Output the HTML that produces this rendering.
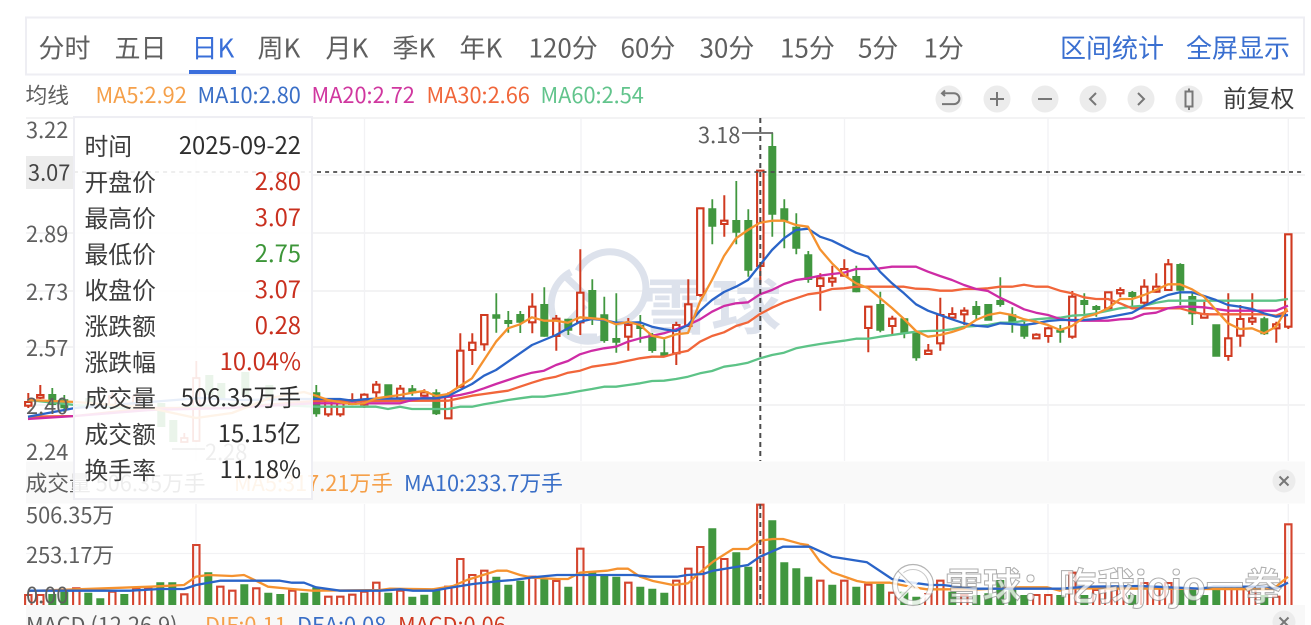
<!DOCTYPE html>
<html lang="zh-CN"><head><meta charset="utf-8"><title>K</title>
<style>
html,body{margin:0;padding:0;background:#fff;width:1311px;height:625px;overflow:hidden}
svg{display:block;font-family:"Noto Sans CJK SC","Liberation Sans",sans-serif;filter:blur(.35px)}
</style></head><body>
<svg width="1311" height="625" viewBox="0 0 1311 625" xmlns="http://www.w3.org/2000/svg">
<!-- tab bar -->
<rect x="26" y="17.5" width="1278" height="57" fill="#fff" stroke="#eeeef3" stroke-width="2"/>
<g font-size="26" fill="#5f5f5f">
<text x="38.500" y="57.500">分时</text><text x="114.500" y="57.500">五日</text>
<text x="191.500" y="57.500" fill="#3a6fd8">日K</text>
<text x="257.500" y="57.500">周K</text><text x="325.500" y="57.500">月K</text><text x="392.500" y="57.500">季K</text><text x="459.500" y="57.500">年K</text>
<text x="528.500" y="57.500">120分</text><text x="620.500" y="57.500">60分</text><text x="699.500" y="57.500">30分</text><text x="780" y="57.500">15分</text><text x="858" y="57.500">5分</text><text x="923.500" y="57.500">1分</text>
<text x="1060" y="57.500" fill="#3a6fd0">区间统计</text><text x="1186" y="57.500" fill="#3a6fd0">全屏显示</text>
</g>
<rect x="189" y="70" width="47" height="4" fill="#3b6fdc"/>
<!-- MA row -->
<g font-size="21.76">
<text x="25.500" y="103" fill="#5f5f5f">均线</text>
<text x="95.500" y="103" fill="#f5a04a">MA5:2.92</text>
<text x="197.500" y="103" fill="#3a6fc7">MA10:2.80</text>
<text x="311.500" y="103" fill="#d0379f">MA20:2.72</text>
<text x="426.500" y="103" fill="#f0663a">MA30:2.66</text>
<text x="540.500" y="103" fill="#62c48c">MA60:2.54</text>
</g>
<!-- toolbar -->
<g fill="#ececec"><circle cx="949" cy="99" r="13.5"/><circle cx="997" cy="99" r="13.5"/><circle cx="1045" cy="99" r="13.5"/><circle cx="1093" cy="99" r="13.5"/><circle cx="1141" cy="99" r="13.5"/><circle cx="1189" cy="99" r="13.5"/></g>
<g fill="none" stroke="#777" stroke-width="2">
<path d="M942 93.300H954a5.400 5.400 0 0 1 0 10.800H942M945 90.500L942 93.300L945 96"/>
<path d="M990 99H1004M997 92V106"/>
<path d="M1038 99H1052"/>
<path d="M1096 93L1090 99L1096 105"/>
<path d="M1138 93L1144 99L1138 105"/>
<path d="M1185.500 91.500H1192.500V106.500H1185.500ZM1189 88.500V91.500M1189 106.500V110"/>
</g>
<text x="1223" y="107" font-size="23.800" fill="#3c3c3c">前复权</text>
<!-- grid -->
<g stroke="#f3f3f4" stroke-width="2" fill="none">
<path d="M26 118H1305M26 175H1305M26 233H1305M26 291H1305M26 347H1305M26 405H1305"/>
</g>
<g stroke="#f2f2f4" stroke-width="1.300" fill="none">
<path d="M196 118V461M364.500 118V461M581 118V461M844.500 118V461M1048 118V461M1288.300 118V461"/>
<path d="M196 504V605M364.500 504V605M581 504V605M844.500 504V605M1048 504V605M1288.300 504V605M26 553.500H1305"/>
</g>
<rect x="26" y="156" width="48" height="33" fill="#ececec"/>
<!-- watermark main -->
<g fill="none" stroke="#dde2ec" stroke-width="7">
<path d="M571 272A36 36 0 1 0 605 337"/>
<path d="M578 271A36 36 0 1 1 617 323"/>
<path d="M566 277L590 300M561 330L585 305M580 337H597"/>
</g>
<text transform="translate(641 329) scale(1.170 1)" font-size="60" font-weight="700" fill="#dde2ec">雪球</text>
<!-- faint candles below tooltip -->
<path fill="none" stroke="#d03a20" stroke-width="1.800" d="M196.300 361V442M184.300 433V440M112.300 392V408M136.300 392V408"/>
<path fill="#fff" stroke="#d03a20" stroke-width="1.800" d="M193.100 378h6.400V441h-6.400zM181.100 438h6.400V442h-6.400zM109.100 396h6.400V405h-6.400zM133.100 396h6.400V404h-6.400z"/>
<path fill="#41973f" d="M157.300 403h8V427h-8zM169.300 420h8V442h-8zM205.300 375h8V395h-8zM217.300 383h8V400h-8zM241.300 372h8V395h-8zM265.300 385h8V398h-8zM85.300 398h8V408h-8z"/>
<path stroke="#666" stroke-width="1.500" d="M172 449H205"/>
<text x="205" y="460" font-size="21.76" fill="#666">2.28</text>
<!-- red wicks -->
<path fill="none" stroke="#d03a20" stroke-width="2" d="M28.300 393V408M40.300 385V399M328.300 398V416.700M340.300 398V416.700M352.300 393.300V405M364.300 393.300V408M376.300 381V398M400.300 385V400M424.300 389.300V397M448.300 392.300V418.300M460.300 333.300V388M472.300 333.300V365M484.300 315V350.700M532.300 293.300V333.300M556.300 315V350.700M580.300 249.300V335M628.300 318V350.700M676.300 321.700V365M688.300 279.300V326.700M700.300 208.300V296.700M724.300 195.300V236.700M760.300 170.700V282.700M820.300 273.300V310.700M832.300 265.700V286.700M844.300 259.300V276.700M868.300 306.700V352.300M892.300 315.700V334M928.300 344V354M940.300 297.700V350.700M952.300 307.300V320M964.300 307.300V325M1036.300 333.300V338.300M1048.300 326.700V342.700M1072.300 291V338.700M1108.300 292.300V310M1120.300 287.300V297.300M1144.300 279.300V305M1156.300 273.300V292.700M1168.300 259V290.700M1204.300 301.700V318.300M1228.300 293.300V360.700M1240.300 305V346.700M1252.300 293.300V325M1276.300 321.700V342.700M1288.300 234.300V329"/>
<!-- red bodies -->
<path fill="#fff" stroke="#d03a20" stroke-width="2.100" d="M25.100 402h6.400V405.700h-6.400zM37.100 395h6.400V397.700h-6.400zM325.100 400h6.400V414.300h-6.400zM337.100 400h6.400V414.300h-6.400zM349.100 400h6.400V404h-6.400zM361.100 394.700h6.400V404.300h-6.400zM373.100 384.700h6.400V392.300h-6.400zM397.100 388.700h6.400V398.300h-6.400zM421.100 392.300h6.400V395.700h-6.400zM445.100 396.700h6.400V418.300h-6.400zM457.100 350.700h6.400V386.700h-6.400zM469.100 342.700h6.400V350h-6.400zM481.100 315h6.400V344.300h-6.400zM529.100 306.700h6.400V322.300h-6.400zM553.100 318.700h6.400V336h-6.400zM577.100 292.700h6.400V322.300h-6.400zM625.100 325h6.400V336.700h-6.400zM673.100 325h6.400V353.300h-6.400zM685.100 304.300h6.400V326h-6.400zM697.100 208.300h6.400V295h-6.400zM721.100 220.700h6.400V224h-6.400zM757.100 170.700h6.400V266h-6.400zM817.100 278.300h6.400V286h-6.400zM829.100 278.300h6.400V281.700h-6.400zM841.100 269h6.400V275.700h-6.400zM865.100 306.700h6.400V328h-6.400zM889.100 318.700h6.400V326h-6.400zM925.100 350.700h6.400V354h-6.400zM937.100 315h6.400V343.300h-6.400zM949.100 314h6.400V317.700h-6.400zM961.100 310.700h6.400V314.300h-6.400zM1033.100 334.700h6.400V338.300h-6.400zM1045.100 328.300h6.400V336h-6.400zM1069.100 296.700h6.400V336.700h-6.400zM1105.100 292.300h6.400V308.300h-6.400zM1117.100 290h6.400V293.300h-6.400zM1141.100 286.700h6.400V302.700h-6.400zM1153.100 286.700h6.400V291.700h-6.400zM1165.100 264.300h6.400V290h-6.400zM1201.100 314h6.400V317.700h-6.400zM1225.100 338.300h6.400V356h-6.400zM1237.100 319h6.400V335.700h-6.400zM1249.100 318.300h6.400V321.700h-6.400zM1273.100 324.300h6.400V328.300h-6.400zM1285.100 234.300h6.400V326.700h-6.400z"/>
<!-- green wicks -->
<path fill="none" stroke="#41973f" stroke-width="1.800" d="M52.300 388V408M64.300 395V412M316.300 385V416.700M412.300 385V395.700M436.300 389.300V415M496.300 293.300V332.700M508.300 311V332.700M520.300 311V333M544.300 287.300V336.700M568.300 318.700V335M592.300 279.300V325M604.300 296.700V342.700M616.300 293.300V352.700M640.300 315V342.700M652.300 333V352.700M664.300 339.300V356.700M712.300 199.300V244.300M736.300 181V244.300M748.300 209.300V276.700M772.300 132.700V236.700M784.300 199.300V248.300M796.300 213.300V254.300M808.300 251V282.700M856.300 265.700V292.300M880.300 291.700V332.300M904.300 318V338.300M916.300 331.700V360.700M976.300 301V319M1000.300 277.300V306.700M1012.300 307.300V332.700M1024.300 321.700V338.700M1060.300 325V342.700M1084.300 293.300V314.300M1096.300 305V316.700M1132.300 291V306.700M1180.300 263.300V305M1192.300 293.300V325M1264.300 316.700V335"/>
<!-- green bodies -->
<path fill="#41973f" d="M48.300 394h8V405h-8zM60.300 399.300h8V408.300h-8zM312.300 392.300h8V414.300h-8zM384.300 384.300h8V398.300h-8zM408.300 388.300h8V393.300h-8zM432.300 392.300h8V414.300h-8zM492.300 314.300h8V318.700h-8zM504.300 320h8V324h-8zM516.300 314h8V322.700h-8zM540.300 304h8V336.700h-8zM564.300 318.700h8V330.700h-8zM588.300 290h8V318.700h-8zM600.300 314.300h8V341h-8zM612.300 338h8V342.700h-8zM636.300 325h8V329h-8zM648.300 334.300h8V351h-8zM660.300 352.300h8V355.700h-8zM708.300 208.300h8V226.700h-8zM732.300 220h8V232.700h-8zM744.300 220h8V270.700h-8zM768.300 146h8V214.700h-8zM780.300 208.300h8V220.700h-8zM792.300 226.700h8V248.700h-8zM804.300 254.300h8V280h-8zM852.300 276h8V292.300h-8zM876.300 304h8V330.700h-8zM900.300 318.300h8V333.300h-8zM912.300 332.300h8V358.300h-8zM972.300 306h8V315h-8zM984.300 304h8V320.700h-8zM996.300 300h8V305h-8zM1008.300 314.300h8V321.700h-8zM1020.300 325h8V336.700h-8zM1056.300 330h8V332.700h-8zM1080.300 300h8V305h-8zM1092.300 306h8V310h-8zM1128.300 292h8V297h-8zM1176.300 264h8V290.700h-8zM1188.300 296h8V314.300h-8zM1212.300 324.300h8V356.700h-8zM1260.300 318.300h8V334.300h-8z"/>
<!-- MA lines -->
<g fill="none" stroke-width="2.300" stroke-linejoin="round">
<polyline stroke="#5dc387" points="28,400 75,405 150,410 230,404 300,406 316,406.700 340,406.700 376,406.700 388,409 400,406.700 412,409 448,409 460,406.700 472,406.700 484,404.300 496,402.300 508,400 520,398.300 532,396.700 544,396.700 556,395 568,393.300 580,391 592,389 604,386.700 616,386.700 628,385 640,383.300 652,381 664,380.700 676,379 688,376.700 700,373.300 712,371 724,366.700 736,365 748,362.700 760,358.300 772,355 784,352.700 796,348.300 808,346 820,344 832,342.300 844,340.700 856,338.700 868,338.700 880,336.700 892,335 904,333.300 916,331.700 928,331 940,330.700 952,329.300 964,326.700 976,326 988,325 1000,322.700 1012,322.700 1024,320.700 1036,319.300 1048,318.300 1060,317.700 1072,315.700 1084,315 1096,313.300 1108,310.700 1120,308.300 1132,306.700 1144,305.700 1156,302.700 1168,300.700 1180,300.700 1192,300.700 1204,300.700 1216,300.700 1228,300.700 1240,300.700 1252,300.700 1264,300.700 1276,300.700 1288,299"/>
<polyline stroke="#f1663a" points="28,416.700 75,416 150,408 230,408 300,402 316,401 448,400.700 460,398.300 472,395.700 484,394 496,392.300 508,390.700 520,386.700 532,382.700 544,379 556,376.700 568,372.700 580,370.700 592,366.700 604,365 616,363.300 628,360.700 640,358.300 652,356.700 664,356.700 676,353.300 688,350.700 700,341.700 712,336 724,332.300 736,326 748,322.300 760,314 772,307.700 784,302.300 796,298.300 808,294.300 820,292.700 832,289 844,288.300 856,286.700 904,286.700 916,288.700 928,289 940,290.700 952,290.700 964,289 976,289 988,288.300 1000,286.700 1012,286.700 1024,284.700 1036,286.700 1048,286.700 1060,290.700 1072,293.300 1084,297.300 1096,299 1108,299 1120,303.300 1132,308.300 1180,308.300 1192,311.700 1204,314.300 1264,314.300 1276,315.700 1288,310.700"/>
<polyline stroke="#ce2ca5" points="28,419 75,416 150,410 230,408 300,404 316,403.300 400,403.300 412,400 424,397.700 436,398.300 448,396.700 460,395 472,392.300 484,388.300 496,384 508,380 520,376 532,372.700 544,370.700 556,365 568,361 580,354.300 592,350.700 604,348.300 616,346.700 628,341.700 640,338.300 652,335.700 664,333.300 676,329.300 688,325 700,319.300 712,311.700 724,306 736,303.300 748,302.300 760,294.300 772,290 784,284 796,280 808,278.300 820,275.700 832,274 844,272.700 856,269 868,269 880,268.300 892,266.700 916,266.700 928,271.700 940,276 952,280 964,285 976,289 988,291 1000,297.700 1012,303.300 1024,309.300 1036,312.700 1048,315 1060,319 1072,320.700 1108,320.700 1120,319.300 1132,318.700 1144,314 1156,312.700 1168,308.300 1180,306.700 1192,306.700 1204,307.300 1216,309 1228,310.700 1276,310.700 1288,305.700"/>
<polyline stroke="#2a64c8" points="28,416.700 75,408 150,402 200,398 240,400 300,399 340,399 352,400.700 364,399.300 376,398.700 436,398.300 448,396 460,390 472,384 484,375.700 496,370 508,361.700 520,353.300 532,345 544,340 556,335 568,328.300 580,321.700 592,319 604,320 616,322.700 628,322.700 640,322.300 652,326.700 664,329.300 676,331 688,325 700,310.700 712,300 724,292 736,286.700 748,280 760,265 772,250 784,238.300 796,230 808,228.700 820,236.700 832,240.700 844,246.700 856,252.700 868,256.700 880,271.700 892,283.300 904,293.300 916,304.300 928,310.700 940,315 952,319.300 964,323.300 976,325.700 988,326.700 1000,323.300 1012,324 1024,325 1036,323.300 1048,321 1060,320 1084,320 1096,319 1108,317.300 1120,315 1132,312.700 1144,306 1156,300 1168,295 1180,292.300 1192,292.300 1204,296 1216,300 1228,305 1240,306.700 1252,309 1264,313.300 1276,316.700 1288,315"/>
<polyline stroke="#f5922f" points="28,400 76,402 150,408 196,418 232,413 270,398 304,392 316,395.700 328,400 340,402.300 352,404 364,403.300 376,398.300 388,396.700 400,395 412,392.700 424,391 436,396 448,394 460,386 472,378.300 484,360 496,341.700 508,328.300 520,324.300 532,317.300 544,320.700 556,320.700 568,322.700 580,317.300 592,318.300 604,319.300 616,324.300 628,322 640,325 652,335.700 664,338.300 676,334.300 688,333 700,301.700 712,280 724,256 736,238.300 748,230 760,222.700 772,220.700 784,220.700 796,225 808,226.700 820,249.300 832,263.300 844,275 856,283.300 868,288 880,298 892,308 904,319 916,331 928,336.700 940,335 952,332 964,328 976,320 988,315 1000,312.700 1012,315 1024,319.300 1036,321.700 1048,325 1060,330 1072,326 1084,317.300 1096,314 1108,308.300 1120,299 1132,299 1144,295 1156,290 1168,284.300 1180,284.300 1192,289.300 1204,296.700 1216,310 1228,323.300 1240,329 1252,328.300 1264,333.300 1276,326.700 1287,308.300"/>
</g>
<!-- 3.18 marker -->
<path stroke="#666" stroke-width="1.800" d="M742 133H773"/>
<text x="698" y="143" font-size="21.76" fill="#5f5f5f">3.18</text>
<!-- volume band -->
<rect x="26" y="461.500" width="1279" height="42" fill="#f9f9f9"/>
<rect x="26" y="605" width="1279" height="20" fill="#f8f8f8"/>
<!-- volume bars -->
<path fill="#41973f" d="M48.300 594h8V605h-8zM60.300 591.700h8V605h-8zM84.300 592.700h8V605h-8zM96.300 598.300h8V605h-8zM120.300 594h8V605h-8zM156.300 582.300h8V605h-8zM168.300 582.300h8V605h-8zM204.300 572.300h8V605h-8zM240.300 584.300h8V605h-8zM264.300 592.700h8V605h-8zM276.300 594h8V605h-8zM300.300 592.700h8V605h-8zM312.300 587.300h8V605h-8zM384.300 592.700h8V605h-8zM408.300 596.700h8V605h-8zM420.300 594.700h8V605h-8zM432.300 588.300h8V605h-8zM492.300 576.700h8V605h-8zM504.300 584.700h8V605h-8zM516.300 580.700h8V605h-8zM540.300 578.700h8V605h-8zM564.300 586.700h8V605h-8zM588.300 571.700h8V605h-8zM600.300 574.700h8V605h-8zM612.300 576.700h8V605h-8zM636.300 586.700h8V605h-8zM648.300 588.700h8V605h-8zM660.300 592.700h8V605h-8zM708.300 528.300h8V605h-8zM732.300 552.300h8V605h-8zM744.300 566.700h8V605h-8zM768.300 520.300h8V605h-8zM780.300 562.300h8V605h-8zM792.300 568.300h8V605h-8zM804.300 576.700h8V605h-8zM828.300 584.700h8V605h-8zM852.300 586.700h8V605h-8zM876.300 584h8V605h-8zM900.300 591.700h8V605h-8zM912.300 596.700h8V605h-8zM948.300 591.700h8V605h-8zM972.300 595h8V605h-8zM984.300 593.300h8V605h-8zM996.300 580h8V605h-8zM1008.300 586.700h8V605h-8zM1020.300 595h8V605h-8zM1056.300 595h8V605h-8zM1080.300 595h8V605h-8zM1128.300 595h8V605h-8zM1176.300 588h8V605h-8zM1188.300 588h8V605h-8zM1200.300 595h8V605h-8zM1212.300 588h8V605h-8zM1260.300 595h8V605h-8z"/>
<path fill="none" stroke="#d4452f" stroke-width="2.100" d="M25.100 605V595h6.400V605M37.100 605V595h6.400V605M73.100 605V588.300h6.400V605M109.100 605V591.700h6.400V605M133.100 605V588.300h6.400V605M145.100 605V588.300h6.400V605M181.100 605V594.300h6.400V605M193.100 605V545h6.400V605M217.100 605V586.700h6.400V605M229.100 605V590.700h6.400V605M253.100 605V588.300h6.400V605M289.100 605V590.700h6.400V605M325.100 605V596.700h6.400V605M337.100 605V596.700h6.400V605M349.100 605V594.700h6.400V605M361.100 605V591.700h6.400V605M373.100 605V582.700h6.400V605M397.100 605V590.700h6.400V605M445.100 605V586.700h6.400V605M457.100 605V559h6.400V605M469.100 605V575h6.400V605M481.100 605V570.700h6.400V605M529.100 605V576.700h6.400V605M553.100 605V581h6.400V605M577.100 605V548.700h6.400V605M625.100 605V582.700h6.400V605M673.100 605V580.700h6.400V605M685.100 605V568.700h6.400V605M697.100 605V547h6.400V605M721.100 605V559h6.400V605M757.100 605V504.700h6.400V605M817.100 605V580.700h6.400V605M841.100 605V580.700h6.400V605M865.100 605V584.700h6.400V605M889.100 605V592.700h6.400V605M925.100 605V594h6.400V605M937.100 605V580.700h6.400V605M961.100 605V595h6.400V605M1033.100 605V595h6.400V605M1045.100 605V595h6.400V605M1069.100 605V572.700h6.400V605M1093.100 605V590h6.400V605M1105.100 605V586.700h6.400V605M1117.100 605V586.700h6.400V605M1141.100 605V583h6.400V605M1153.100 605V588h6.400V605M1165.100 605V583h6.400V605M1225.100 605V586.700h6.400V605M1237.100 605V588h6.400V605M1249.100 605V588h6.400V605M1273.100 605V596.700h6.400V605M1285.100 605V524.300h6.400V605"/>
<g fill="none" stroke-width="2.300" stroke-linejoin="round">
<polyline stroke="#f5922f" points="28,591 150,586.700 184,585 196,576.700 208,575 232,576 244,575 256,580.700 268,586.700 292,589 304,590 313,590.700 380,590 390,588.700 433,589.300 453,586 467,580 483,575 497,570.700 507,570.700 520,575 533,577.700 557,579 568,579 580,572.700 607,570.700 617,568.700 628,568.700 640,576.700 653,581 673,585 688,583.300 697,575 713,561.700 733,549 748,549 760,540.700 773,539 783,539 800,543.700 808,545 820,561.700 832,572.300 857,581 867,582.700 890,582.700 913,587.300 927,589.300 980,589.300 1020,587.300 1047,587.300 1060,590.700 1067,588.300 1273,589.300 1288,576.700"/>
<polyline stroke="#2a64c8" points="28,590.700 130,590.700 160,589 184,589 196,585 220,580.700 280,580.700 292,582.700 304,582.700 316,587.300 340,590.700 380,590.700 400,589.300 413,590.700 433,590.700 453,587.300 473,584 500,581 513,580 533,577.300 557,575 633,575 650,576.700 677,576.700 687,575 703,574 713,570.700 748,565 760,556.700 783,546.700 810,546.700 832,556.700 867,562.300 892,579 913,582.700 930,585 943,585 973,588.700 1060,588.700 1087,586.700 1140,586 1200,588.700 1213,586.700 1267,586.700 1276,588.700 1288,582.700"/>
</g>
<!-- crosshair -->
<path fill="none" stroke="#4c4c4c" stroke-width="2" stroke-dasharray="5 4" d="M760.300 118V461M760.300 504V605"/>
<path fill="none" stroke="#4c4c4c" stroke-width="1.800" stroke-dasharray="4 4.100" d="M74 172H1305"/>
<!-- axis labels -->
<g font-size="21.76" fill="#5f5f5f">
<text x="26" y="138">3.22</text><text x="28" y="180.500" fill="#444">3.07</text><text x="26" y="242">2.89</text><text x="26" y="300">2.73</text><text x="26" y="356">2.57</text><text x="26" y="414">2.40</text><text x="26" y="460">2.24</text>
<text x="26" y="523">506.35万</text><text x="26" y="563">253.17万</text><text x="26" y="603">0.00</text>
<text x="25.500" y="491">成交量 506.35万手</text>
<text x="234" y="491" fill="#f5a04a">MA5:317.21万手</text>
<text x="404" y="491" fill="#3a6fc7">MA10:233.7万手</text>
<text x="26" y="633">MACD (12,26,9)</text>
<text x="205" y="633" fill="#f5a04a">DIF:0.11</text>
<text x="297" y="633" fill="#3a6fc7">DEA:0.08</text>
<text x="398" y="633" fill="#d03a20">MACD:0.06</text>
</g>
<circle cx="1284" cy="481" r="11.500" fill="#ececec"/>
<path d="M1279.500 476.500L1288.500 485.500M1288.500 476.500L1279.500 485.500" stroke="#777" stroke-width="2"/>
<circle cx="1284" cy="622" r="11.500" fill="#ececec"/>
<path d="M1279.500 617.500L1288.500 626.500M1288.500 617.500L1279.500 626.500" stroke="#777" stroke-width="2"/>
<!-- tooltip -->
<rect x="74" y="117" width="238" height="382" fill="#fff" fill-opacity=".89" stroke="#eeeef3" stroke-width="2"/>
<g font-size="23.800" fill="#3c3c3c">
<text x="84.500" y="155">时间</text><text x="84.500" y="191">开盘价</text><text x="84.500" y="227">最高价</text><text x="84.500" y="263">最低价</text><text x="84.500" y="299">收盘价</text><text x="84.500" y="335">涨跌额</text><text x="84.500" y="371">涨跌幅</text><text x="84.500" y="407">成交量</text><text x="84.500" y="443">成交额</text><text x="84.500" y="479">换手率</text>
</g>
<g font-size="23.800" fill="#2e2e2e" text-anchor="end">
<text x="301" y="154">2025-09-22</text>
<text x="301" y="190" fill="#c9301f">2.80</text>
<text x="301" y="226" fill="#c9301f">3.07</text>
<text x="301" y="262" fill="#3d9639">2.75</text>
<text x="301" y="298" fill="#c9301f">3.07</text>
<text x="301" y="334" fill="#c9301f">0.28</text>
<text x="301" y="370" fill="#c9301f">10.04%</text>
<text x="301" y="406">506.35万手</text>
<text x="301" y="442">15.15亿</text>
<text x="301" y="478">11.18%</text>
</g>
<!-- bottom-right watermark -->
<g fill="none">
<circle cx="913" cy="585" r="18" stroke="#fff" stroke-opacity=".85" stroke-width="5"/>
<circle cx="913" cy="585" r="20.500" stroke="#777" stroke-opacity=".55" stroke-width="1.200"/>
<circle cx="913" cy="585" r="15.500" stroke="#777" stroke-opacity=".4" stroke-width="1"/>
<path d="M900 573L925 598M900 597L922 575" stroke="#fff" stroke-opacity=".85" stroke-width="5"/>
<path d="M898 571L915 588M898 600L912 586" stroke="#777" stroke-opacity=".45" stroke-width="1"/>
</g>
<text x="945" y="600" font-size="38" font-weight="700" fill="#fff" fill-opacity=".72" stroke="#777" stroke-opacity=".6" stroke-width="1">雪球：吃我jojo一拳</text>
</svg>
</body></html>
